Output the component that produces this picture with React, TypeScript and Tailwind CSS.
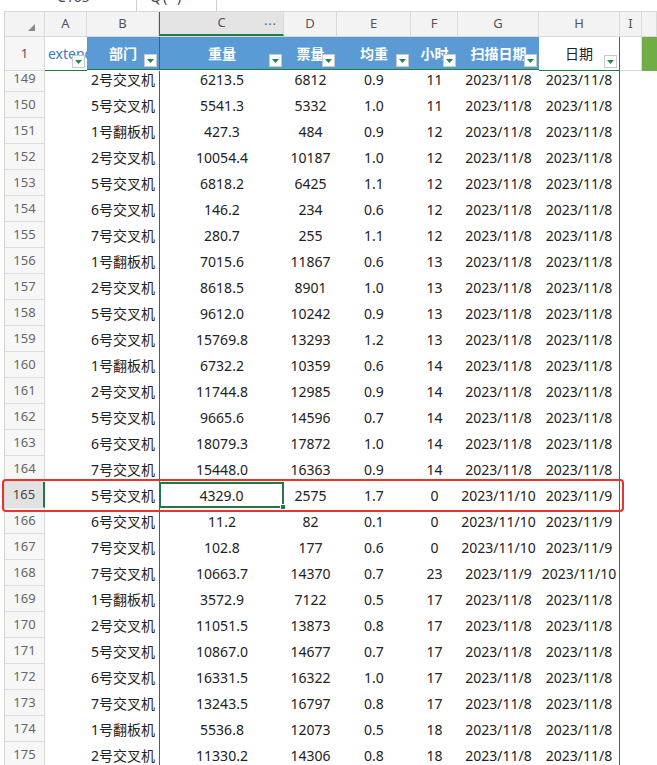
import React from "react";

type Row = [number, string, string, string, string, string, string, string];

const rows: Row[] = [
  [149, "2号交叉机", "6213.5", "6812", "0.9", "11", "2023/11/8", "2023/11/8"],
  [150, "5号交叉机", "5541.3", "5332", "1.0", "11", "2023/11/8", "2023/11/8"],
  [151, "1号翻板机", "427.3", "484", "0.9", "12", "2023/11/8", "2023/11/8"],
  [152, "2号交叉机", "10054.4", "10187", "1.0", "12", "2023/11/8", "2023/11/8"],
  [153, "5号交叉机", "6818.2", "6425", "1.1", "12", "2023/11/8", "2023/11/8"],
  [154, "6号交叉机", "146.2", "234", "0.6", "12", "2023/11/8", "2023/11/8"],
  [155, "7号交叉机", "280.7", "255", "1.1", "12", "2023/11/8", "2023/11/8"],
  [156, "1号翻板机", "7015.6", "11867", "0.6", "13", "2023/11/8", "2023/11/8"],
  [157, "2号交叉机", "8618.5", "8901", "1.0", "13", "2023/11/8", "2023/11/8"],
  [158, "5号交叉机", "9612.0", "10242", "0.9", "13", "2023/11/8", "2023/11/8"],
  [159, "6号交叉机", "15769.8", "13293", "1.2", "13", "2023/11/8", "2023/11/8"],
  [160, "1号翻板机", "6732.2", "10359", "0.6", "14", "2023/11/8", "2023/11/8"],
  [161, "2号交叉机", "11744.8", "12985", "0.9", "14", "2023/11/8", "2023/11/8"],
  [162, "5号交叉机", "9665.6", "14596", "0.7", "14", "2023/11/8", "2023/11/8"],
  [163, "6号交叉机", "18079.3", "17872", "1.0", "14", "2023/11/8", "2023/11/8"],
  [164, "7号交叉机", "15448.0", "16363", "0.9", "14", "2023/11/8", "2023/11/8"],
  [165, "5号交叉机", "4329.0", "2575", "1.7", "0", "2023/11/10", "2023/11/9"],
  [166, "6号交叉机", "11.2", "82", "0.1", "0", "2023/11/10", "2023/11/9"],
  [167, "7号交叉机", "102.8", "177", "0.6", "0", "2023/11/10", "2023/11/9"],
  [168, "7号交叉机", "10663.7", "14370", "0.7", "23", "2023/11/9", "2023/11/10"],
  [169, "1号翻板机", "3572.9", "7122", "0.5", "17", "2023/11/8", "2023/11/8"],
  [170, "2号交叉机", "11051.5", "13873", "0.8", "17", "2023/11/8", "2023/11/8"],
  [171, "5号交叉机", "10867.0", "14677", "0.7", "17", "2023/11/8", "2023/11/8"],
  [172, "6号交叉机", "16331.5", "16322", "1.0", "17", "2023/11/8", "2023/11/8"],
  [173, "7号交叉机", "13243.5", "16797", "0.8", "17", "2023/11/8", "2023/11/8"],
  [174, "1号翻板机", "5536.8", "12073", "0.5", "18", "2023/11/8", "2023/11/8"],
  [175, "2号交叉机", "11330.2", "14306", "0.8", "18", "2023/11/8", "2023/11/8"],
];

const grid =
  "grid grid-cols-[40px_42px_72px_125px_53px_74px_47px_81px_81px_22px_1fr]";

function FilterBtn() {
  return (
    <span className="absolute right-[2px] bottom-[2px] w-[13px] h-[13px] bg-white border border-[#c9c9c9] flex items-center justify-center">
      <svg width="7" height="4" viewBox="0 0 7 4">
        <polygon points="0,0 7,0 3.5,4" fill="#1e8a4c" />
      </svg>
    </span>
  );
}

function BlueHead({ label, green }: { label: string; green?: boolean }) {
  return (
    <div
      className={`relative h-[33px] bg-[#5b9bd5] text-white font-bold flex items-center justify-center border-b border-[#1f7a45] ${
        green ? "border-l border-l-[#1f7a45]" : ""
      }`}
    >
      {label}
      <FilterBtn />
    </div>
  );
}

export default function App() {
  const letters = ["A", "B", "C", "D", "E", "F", "G", "H", "I", ""];
  return (
    <div className="relative w-[657px] h-[765px] overflow-hidden bg-white text-[14px] text-[#222] font-['Noto_Sans','Noto_Sans_CJK_SC',sans-serif]">
      {/* cut-off formula bar */}
      <div className="h-[11px] overflow-hidden flex text-[14px] text-[#444]">
        <div className="w-[137px] border-r border-[#d0d0d0] pl-[57px] -mt-[14px]">C165</div>
        <div className="w-[80px] border-r border-[#d0d0d0] pl-[13px] -mt-[14px] tracking-[2px]">Q(ˇ)</div>
      </div>

      <div className="pl-[4px]">
        <div className="border-l border-[#d4d4d4]">
          {/* column letters */}
          <div className={`${grid} h-[26px] border-t border-b border-[#d9d9d9] bg-[#f3f3f3] text-[13px] text-[#555]`}>
            <div className="relative border-r border-[#d9d9d9]">
              <svg className="absolute right-[9px] bottom-[5px]" width="7" height="7" viewBox="0 0 7 7">
                <polygon points="7,0 7,7 0,7" fill="#8a8a8a" />
              </svg>
            </div>
            {letters.map((l, i) =>
              l === "C" ? (
                <div
                  key={i}
                  className="relative flex items-center justify-center bg-[#e4e4e4] border-l border-[#1f7a45] border-b-2 border-b-[#1f7a45] border-r border-r-[#d9d9d9]"
                >
                  C
                  <span className="absolute right-[6px] top-[4px] text-[12px] tracking-[1px] text-[#555]">···</span>
                </div>
              ) : (
                <div key={i} className="flex items-center justify-center border-r border-[#d9d9d9]">
                  {l}
                </div>
              )
            )}
          </div>

          {/* header row 1 */}
          <div className={`${grid} h-[34px]`}>
            <div className="flex items-center justify-center bg-[#f6f6f6] border-r border-b border-[#d9d9d9] text-[13px] text-[#555]">
              1
            </div>
            <div className="relative h-[34px] overflow-hidden border-b border-[#1f7a45] pl-[3px] flex items-center text-[#3d78c4]">
              extend
              <FilterBtn />
            </div>
            <BlueHead label="部门" />
            <BlueHead label="重量" green />
            <BlueHead label="票量" />
            <BlueHead label="均重" />
            <BlueHead label="小时" />
            <BlueHead label="扫描日期" />
            <div className="relative h-[34px] flex items-center justify-center border-b border-r border-[#1f7a45]">
              日期
              <FilterBtn />
            </div>
            <div className="border-b border-r border-[#d9d9d9]" />
            <div className="bg-[#70ad47]" />
          </div>

          {/* data rows */}
          <div className="h-[694px] overflow-hidden">
            <div className="-mt-[5px]">
              {rows.map((r) => {
                const active = r[0] === 165;
                return (
                  <div key={r[0]} className={`${grid} h-[26px]`}>
                    <div
                      className={`flex items-center justify-center border-b border-[#dedede] text-[13px] ${
                        active
                          ? "bg-[#e2e2e2] text-[#444] border-r-2 border-r-[#1f7a45]"
                          : "bg-[#f7f7f7] text-[#666] border-r border-r-[#d9d9d9]"
                      }`}
                    >
                      {r[0]}
                    </div>
                    <div />
                    <div className="flex items-center justify-end pr-[4px] whitespace-nowrap">{r[1]}</div>
                    <div
                      className={`relative flex items-center justify-center ${
                        active ? "border-2 border-[#1f7a45]" : "border-l border-[#1f7a45]"
                      }`}
                    >
                      {r[2]}
                      {active && (
                        <span className="absolute -right-[4px] -bottom-[4px] w-[6px] h-[6px] bg-[#1f7a45] border border-white" />
                      )}
                    </div>
                    <div className="flex items-center justify-center">{r[3]}</div>
                    <div className="flex items-center justify-center">{r[4]}</div>
                    <div className="flex items-center justify-center">{r[5]}</div>
                    <div className="flex items-center justify-center whitespace-nowrap">{r[6]}</div>
                    <div className="flex items-center justify-center whitespace-nowrap border-r border-[#1f7a45]">{r[7]}</div>
                    <div />
                    <div />
                  </div>
                );
              })}
            </div>
          </div>
        </div>
      </div>

      {/* red highlight annotation */}
      <div className="absolute left-[2px] top-[479px] w-[622px] h-[33px] border-[2.5px] border-[#e8342c] rounded-[4px] pointer-events-none" />
    </div>
  );
}
